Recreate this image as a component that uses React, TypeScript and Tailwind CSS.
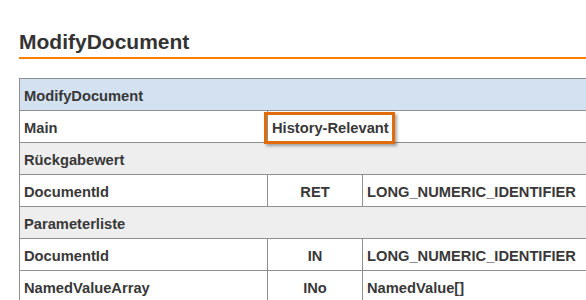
import React from 'react';

type Row =
    | { kind: 'header'; label: string }
    | { kind: 'section'; label: string }
    | { kind: 'main'; label: string; value: string }
    | { kind: 'param'; name: string; dir: string; type: string };

const rows: Row[] = [
    { kind: 'header', label: 'ModifyDocument' },
    { kind: 'main', label: 'Main', value: 'History-Relevant' },
    { kind: 'section', label: 'Rückgabewert' },
    { kind: 'param', name: 'DocumentId', dir: 'RET', type: 'LONG_NUMERIC_IDENTIFIER' },
    { kind: 'section', label: 'Parameterliste' },
    { kind: 'param', name: 'DocumentId', dir: 'IN', type: 'LONG_NUMERIC_IDENTIFIER' },
    { kind: 'param', name: 'NamedValueArray', dir: 'INo', type: 'NamedValue[]' },
];

const cell = 'border border-[#8f8f8f] pl-[4px] pr-[4px] pt-[9px] pb-[5px] leading-[17px] align-top';

const App: React.FC = () => {
    return (
        <div className="w-full h-[300px] overflow-hidden bg-white font-['Liberation_Sans',Arial,sans-serif] text-[#383838]">
            <div className="pl-[19px] pt-[30px]">
                <h1 className="text-[21px] leading-[24px] font-bold text-[#333333] pb-[3px]">
                    ModifyDocument
                </h1>
                <div className="h-[2px] bg-[#ff8000]" />
                <table className="mt-[19px] border-collapse table-fixed w-[640px] text-[14.7px] font-bold">
                    <colgroup>
                        <col className="w-[248px]" />
                        <col className="w-[95px]" />
                        <col className="w-[297px]" />
                    </colgroup>
                    <tbody>
                        {rows.map((row, i) => {
                            if (row.kind === 'header') {
                                return (
                                    <tr key={i} className="bg-[#d3e1f0]">
                                        <td colSpan={3} className={cell}>{row.label}</td>
                                    </tr>
                                );
                            }
                            if (row.kind === 'section') {
                                return (
                                    <tr key={i} className="bg-[#eeeeee]">
                                        <td colSpan={3} className={cell}>{row.label}</td>
                                    </tr>
                                );
                            }
                            if (row.kind === 'main') {
                                return (
                                    <tr key={i} className="bg-white">
                                        <td className={`${cell} pt-[8px] pb-[5px]`}>{row.label}</td>
                                        <td colSpan={2} className={`${cell} relative pt-[8px] pb-[5px]`}>
                                            {row.value}
                                            <div className="absolute left-[-4px] top-[1px] w-[131px] h-[32px] border-[3px] border-[#e36c0a] shadow-[2px_2px_3px_rgba(0,0,0,0.35)] pointer-events-none" />
                                        </td>
                                    </tr>
                                );
                            }
                            return (
                                <tr key={i} className="bg-white">
                                    <td className={cell}>{row.name}</td>
                                    <td className={`${cell} text-center`}>{row.dir}</td>
                                    <td className={cell}>{row.type}</td>
                                </tr>
                            );
                        })}
                    </tbody>
                </table>
            </div>
        </div>
    );
};

export default App;
